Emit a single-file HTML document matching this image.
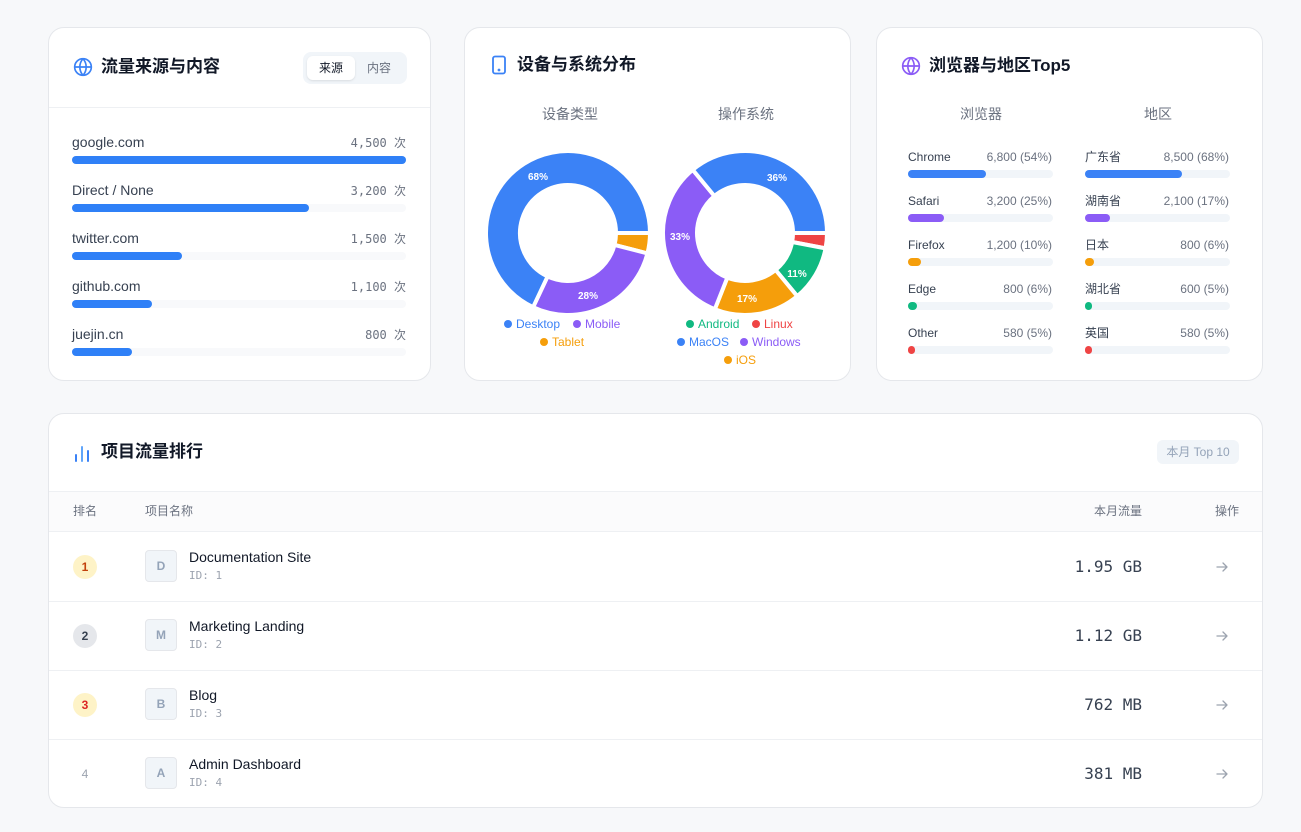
<!DOCTYPE html>
<html><head><meta charset="utf-8"><style>
*{box-sizing:border-box;margin:0;padding:0}
body{width:1301px;height:832px;background:#f7f8fa;font-family:"Liberation Sans","Noto Sans CJK SC",sans-serif;color:#1f2937;position:relative;overflow:hidden}
.card{position:absolute;background:#fff;border:1px solid #e5e7eb;border-radius:16px}
.abs{position:absolute}
.title{font-size:17px;font-weight:bold;color:#111827;line-height:20px}
.mono{font-family:"DejaVu Sans Mono","Liberation Mono","Noto Sans CJK SC",monospace}
.track{position:absolute;height:8px;border-radius:4px;background:#f3f4f6}
.fill{height:8px;border-radius:4px}
.lbl{font-size:14px;color:#374151}
.val{font-size:12px;color:#6b7280}
.s{font-size:12px}
.dot{display:inline-block;width:8px;height:8px;border-radius:4px;margin-right:4px;vertical-align:0}
</style></head><body>

<div class="card" style="left:48px;top:27px;width:383px;height:354px">
  <svg class="abs" style="left:24px;top:29px" width="20" height="20" viewBox="0 0 24 24" fill="none" stroke="#3b82f6" stroke-width="2"><circle cx="12" cy="12" r="10"/><path d="M2 12h20M12 2a15 15 0 0 1 0 20M12 2a15 15 0 0 0 0 20"/></svg>
  <div class="abs title" style="left:52px;top:29px">流量来源与内容</div>
  <div class="abs" style="left:254px;top:24px;width:104px;height:32px;background:#f1f5f9;border-radius:8px"></div>
  <div class="abs" style="left:258px;top:28px;width:48px;height:24px;background:#fff;border-radius:6px;box-shadow:0 1px 2px rgba(0,0,0,.1);font-size:12px;text-align:center;line-height:24px;color:#111827">来源</div>
  <div class="abs" style="left:306px;top:28px;width:48px;height:24px;font-size:12px;text-align:center;line-height:24px;color:#6b7280">内容</div>
  <div class="abs" style="left:0;top:79px;width:381px;height:1px;background:#eef0f3"></div>
</div>
<div class="abs lbl" style="left:72px;top:134px">google.com</div><div class="abs val mono" style="right:895px;top:134px">4,500 次</div>
<div class="track" style="left:72px;top:156px;width:334px"><div class="fill" style="width:100%;background:#2f80f7"></div></div>
<div class="abs lbl" style="left:72px;top:182px">Direct / None</div><div class="abs val mono" style="right:895px;top:182px">3,200 次</div>
<div class="track" style="left:72px;top:204px;width:334px;background:#f8f9fb"><div class="fill" style="width:71%;background:#2f80f7"></div></div>
<div class="abs lbl" style="left:72px;top:230px">twitter.com</div><div class="abs val mono" style="right:895px;top:230px">1,500 次</div>
<div class="track" style="left:72px;top:252px;width:334px;background:#f8f9fb"><div class="fill" style="width:33%;background:#2f80f7"></div></div>
<div class="abs lbl" style="left:72px;top:278px">github.com</div><div class="abs val mono" style="right:895px;top:278px">1,100 次</div>
<div class="track" style="left:72px;top:300px;width:334px;background:#f8f9fb"><div class="fill" style="width:24%;background:#2f80f7"></div></div>
<div class="abs lbl" style="left:72px;top:326px">juejin.cn</div><div class="abs val mono" style="right:895px;top:326px">800 次</div>
<div class="track" style="left:72px;top:348px;width:334px;background:#f8f9fb"><div class="fill" style="width:18%;background:#2f80f7"></div></div>

<div class="card" style="left:464px;top:27px;width:387px;height:354px">
  <svg class="abs" style="left:25px;top:27px" width="18" height="20" viewBox="0 0 18 20" fill="none" stroke="#3b82f6" stroke-width="1.8"><rect x="3" y="1.5" width="12" height="17" rx="2"/><circle cx="9" cy="15" r=".5" fill="#3b82f6"/></svg>
  <div class="abs title" style="left:52px;top:27px">设备与系统分布</div>
  <div class="abs" style="left:77px;top:77px;font-size:14px;color:#6b7280;line-height:18px">设备类型</div>
  <div class="abs" style="left:253px;top:77px;font-size:14px;color:#6b7280;line-height:18px">操作系统</div>
</div>
<svg id="donuts" class="abs" style="left:0;top:0" width="1301" height="400"></svg>
<div class="abs s" style="left:504px;top:317px;color:#3b82f6"><span class="dot" style="background:#3b82f6"></span>Desktop</div>
<div class="abs s" style="left:573px;top:317px;color:#8b5cf6"><span class="dot" style="background:#8b5cf6"></span>Mobile</div>
<div class="abs s" style="left:540px;top:335px;color:#f59e0b"><span class="dot" style="background:#f59e0b"></span>Tablet</div>
<div class="abs s" style="left:686px;top:317px;color:#10b981"><span class="dot" style="background:#10b981"></span>Android</div>
<div class="abs s" style="left:752px;top:317px;color:#ef4444"><span class="dot" style="background:#ef4444"></span>Linux</div>
<div class="abs s" style="left:677px;top:335px;color:#3b82f6"><span class="dot" style="background:#3b82f6"></span>MacOS</div>
<div class="abs s" style="left:740px;top:335px;color:#8b5cf6"><span class="dot" style="background:#8b5cf6"></span>Windows</div>
<div class="abs s" style="left:724px;top:353px;color:#f59e0b"><span class="dot" style="background:#f59e0b"></span>iOS</div>

<div class="card" style="left:876px;top:27px;width:387px;height:354px">
  <svg class="abs" style="left:24px;top:28px" width="20" height="20" viewBox="0 0 24 24" fill="none" stroke="#8b5cf6" stroke-width="2"><circle cx="12" cy="12" r="10"/><path d="M2 12h20M12 2a15 15 0 0 1 0 20M12 2a15 15 0 0 0 0 20"/></svg>
  <div class="abs title" style="left:52px;top:28px">浏览器与地区Top5</div>
  <div class="abs" style="left:83px;top:77px;font-size:14px;color:#6b7280;line-height:18px">浏览器</div>
  <div class="abs" style="left:267px;top:77px;font-size:14px;color:#6b7280;line-height:18px">地区</div>
</div>
<div id="bars"></div>

<div class="card" style="left:48px;top:413px;width:1215px;height:395px;overflow:hidden">
  <svg class="abs" style="left:25px;top:30px" width="16" height="18" viewBox="0 0 16 18"><g stroke-width="2" stroke-linecap="round"><line x1="2" y1="17" x2="2" y2="11" stroke="#3b82f6"/><line x1="8" y1="17" x2="8" y2="3" stroke="#60a5fa"/><line x1="14" y1="17" x2="14" y2="7" stroke="#3b82f6"/></g></svg>
  <div class="abs title" style="left:52px;top:28px">项目流量排行</div>
  <div class="abs" style="left:1108px;top:26px;width:82px;height:24px;background:#f1f5f9;border-radius:6px;font-size:12px;color:#94a3b8;text-align:center;line-height:24px">本月 Top 10</div>
  <div class="abs" style="left:0;top:77px;width:1215px;height:41px;background:#fbfbfc;border-top:1px solid #eef0f3;border-bottom:1px solid #eef0f3"></div>
  <div class="abs" style="left:24px;top:89px;font-size:12px;color:#6b7280;line-height:16px">排名</div>
  <div class="abs" style="left:96px;top:89px;font-size:12px;color:#6b7280;line-height:16px">项目名称</div>
  <div class="abs" style="left:1045px;top:89px;font-size:12px;color:#6b7280;line-height:16px">本月流量</div>
  <div class="abs" style="left:1166px;top:89px;font-size:12px;color:#6b7280;line-height:16px">操作</div>
  <div id="rows"></div>
</div>

<script>
function arc(cx,cy,r1,r2,a0,a1){
  const t=a=>a*Math.PI/180;
  const p=(r,a)=>[(cx+r*Math.cos(t(a))).toFixed(2),(cy+r*Math.sin(t(a))).toFixed(2)];
  const L=(a1-a0)>180?1:0;
  const A=p(r2,a0),B=p(r2,a1),C=p(r1,a1),D=p(r1,a0);
  return `M${A}A${r2} ${r2} 0 ${L} 1 ${B}L${C}A${r1} ${r1} 0 ${L} 0 ${D}Z`;
}
let s='';
function donut(cx,cy,segs){let a=0;for(const [p,c] of segs){const b=a+p*3.6;s+=`<path d="${arc(cx,cy,48,82,a,b)}" fill="${c}" stroke="#fff" stroke-width="4" stroke-linejoin="miter"/>`;a=b;}}
donut(568,233,[[4,'#f59e0b'],[28,'#8b5cf6'],[68,'#3b82f6']]);
donut(745,233,[[3,'#ef4444'],[11,'#10b981'],[17,'#f59e0b'],[33,'#8b5cf6'],[36,'#3b82f6']]);
const T=(x,y,t)=>s+=`<text x="${x}" y="${y}" fill="#fff" font-size="10" font-weight="bold" text-anchor="middle" font-family="Liberation Sans">${t}</text>`;
T(538,180,'68%');T(588,299,'28%');T(777,181,'36%');T(680,240,'33%');T(797,277,'11%');T(747,302,'17%');
document.getElementById('donuts').innerHTML=s;

const B=[['Chrome','6,800 (54%)',54,'#3b82f6'],['Safari','3,200 (25%)',25,'#8b5cf6'],['Firefox','1,200 (10%)',9,'#f59e0b'],['Edge','800 (6%)',6,'#10b981'],['Other','580 (5%)',4,'#ef4444']];
const R=[['广东省','8,500 (68%)',67,'#3b82f6'],['湖南省','2,100 (17%)',17,'#8b5cf6'],['日本','800 (6%)',6,'#f59e0b'],['湖北省','600 (5%)',4,'#10b981'],['英国','580 (5%)',4,'#ef4444']];
let h='';
function col(arr,x){arr.forEach((d,i)=>{const y=150+i*44;
 h+=`<div class="abs" style="left:${x}px;top:${y}px;font-size:12px;color:#374151;line-height:15px">${d[0]}</div><div class="abs" style="left:${x}px;width:144px;text-align:right;top:${y}px;font-size:12px;color:#6b7280;line-height:15px">${d[1]}</div><div class="track" style="left:${x}px;top:${y+20}px;width:145px;background:#f1f5f9"><div class="fill" style="width:${Math.max(d[2],5)}%;background:${d[3]}"></div></div>`;});}
col(B,908);col(R,1085);
document.getElementById('bars').innerHTML=h;

const rows=[['1','#fef3c7','#c2410c','D','Documentation Site','1.95 GB'],['2','#e5e7eb','#374151','M','Marketing Landing','1.12 GB'],['3','#fef3c7','#dc2626','B','Blog','762 MB'],['4','','#9ca3af','A','Admin Dashboard','381 MB']];
let r='';
rows.forEach((d,i)=>{const y=119+i*69;
 r+=`<div class="abs" style="left:24px;top:${y+22}px;width:24px;height:24px;border-radius:12px;background:${d[1]||'transparent'};color:${d[2]};font-size:12px;font-weight:${d[1]?'bold':'normal'};text-align:center;line-height:24px">${d[0]}</div>
 <div class="abs" style="left:96px;top:${y+17}px;width:32px;height:32px;border:1px solid #e5e7eb;border-radius:4px;background:#f1f5f9;color:#94a3b8;font-size:12px;font-weight:bold;text-align:center;line-height:30px">${d[3]}</div>
 <div class="abs" style="left:140px;top:${y+16}px;font-size:14px;color:#111827">${d[4]}</div>
 <div class="abs mono" style="left:140px;top:${y+36}px;font-size:11px;color:#9ca3af">ID: ${i+1}</div>
 <div class="abs mono" style="right:120px;top:${y+24}px;font-size:16px;color:#374151">${d[5]}</div>
 <svg class="abs" style="left:1166px;top:${y+27}px" width="14" height="14" viewBox="0 0 14 14" fill="none" stroke="#9ca3af" stroke-width="1.3" stroke-linecap="round" stroke-linejoin="round"><path d="M2 7h10M8 3l4 4-4 4"/></svg>`;
 if(i<3) r+=`<div class="abs" style="left:0;top:${y+68}px;width:1215px;height:1px;background:#eef0f3"></div>`;});
document.getElementById('rows').innerHTML=r;
</script>
</body></html>
